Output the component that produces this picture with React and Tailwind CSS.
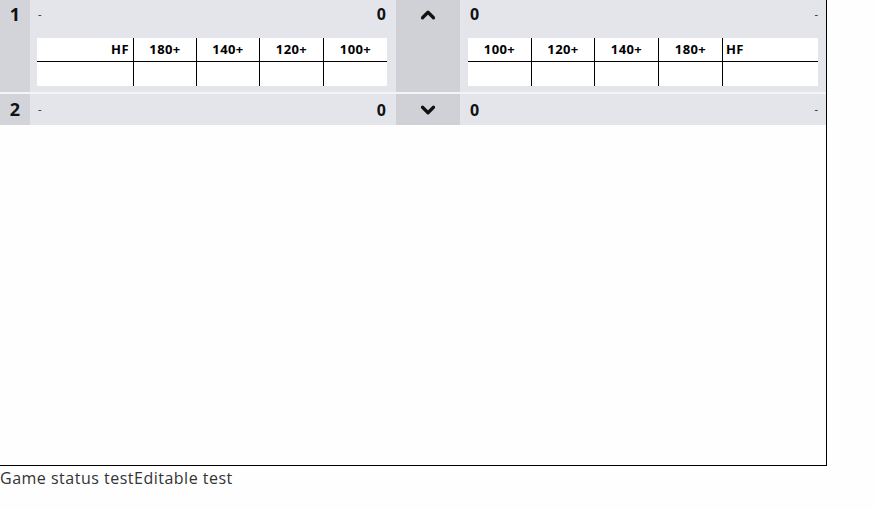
import { ChevronUp, ChevronDown } from 'lucide-react';

const LEFT_COLS = [
  { label: 'HF', w: 'w-[96px]', align: 'justify-end pr-[4px]' },
  { label: '180+', w: 'w-[63px]', align: 'justify-center' },
  { label: '140+', w: 'w-[63px]', align: 'justify-center' },
  { label: '120+', w: 'w-[64px]', align: 'justify-center' },
  { label: '100+', w: 'w-[64px]', align: 'justify-center' },
];

const RIGHT_COLS = [
  { label: '100+', w: 'w-[63px]', align: 'justify-center' },
  { label: '120+', w: 'w-[63px]', align: 'justify-center' },
  { label: '140+', w: 'w-[64px]', align: 'justify-center' },
  { label: '180+', w: 'w-[64px]', align: 'justify-center' },
  { label: 'HF', w: 'w-[96px]', align: 'justify-start pl-[3px]' },
];

const ScoreTable = ({ cols, className }) => (
  <div className={`flex bg-white w-[350px] ${className}`}>
    {cols.map((c, i) => (
      <div key={c.label} className={`${c.w} flex flex-col ${i > 0 ? 'border-l border-black' : ''}`}>
        <div className={`h-[24px] flex items-center ${c.align} text-[13px] tracking-[0.4px] font-bold text-black border-b border-black`}>
          {c.label}
        </div>
        <div className="h-[24px]" />
      </div>
    ))}
  </div>
);

const Header = ({ num, Chevron, expanded }) => (
  <div className="flex">
    <div className="w-[30px] bg-[#d3d4da] flex justify-center pt-[4px] text-[18px] font-bold text-[#111] leading-[20px]">
      {num}
    </div>
    <div className="w-[366px] bg-[#e4e5ea] flex flex-col">
      <div className="h-[28px] flex items-center justify-between pl-[8px] pr-[10px]">
        <span className="text-[11px] text-[#222]">-</span>
        <span className="text-[16px] font-bold text-[#111]">0</span>
      </div>
      {expanded && <ScoreTable cols={LEFT_COLS} className="ml-[7px] mt-[10px] mb-[6px]" />}
    </div>
    <div className="w-[64px] bg-[#d0d1d7] flex justify-center pt-[4px]">
      <Chevron size={22} strokeWidth={3.5} className="text-[#111]" />
    </div>
    <div className="w-[366px] bg-[#e4e5ea] flex flex-col">
      <div className="h-[28px] flex items-center justify-between pl-[10px] pr-[8px]">
        <span className="text-[16px] font-bold text-[#111]">0</span>
        <span className="text-[11px] text-[#222]">-</span>
      </div>
      {expanded && <ScoreTable cols={RIGHT_COLS} className="ml-[8px] mt-[10px] mb-[6px]" />}
    </div>
  </div>
);

export default function App() {
  return (
    <div className="bg-[#fefefe] w-[874px] h-[510px] overflow-hidden" style={{ fontFamily: '"Open Sans", "Liberation Sans", sans-serif' }}>
      <div className="w-[827px] h-[466px] border-r border-b border-black flex flex-col">
        <Header num="1" Chevron={ChevronUp} expanded />
        <div className="h-[2px] bg-[#f4f4f6]" />
        <div className="h-[31px] flex [&>div]:h-[31px]">
          <div className="w-[30px] bg-[#d3d4da] flex items-center justify-center text-[18px] font-bold text-[#111]">2</div>
          <div className="w-[366px] bg-[#e4e5ea] flex items-center justify-between pl-[8px] pr-[10px]">
            <span className="text-[11px] text-[#222]">-</span>
            <span className="text-[16px] font-bold text-[#111]">0</span>
          </div>
          <div className="w-[64px] bg-[#d0d1d7] flex items-center justify-center">
            <ChevronDown size={22} strokeWidth={3.5} className="text-[#111]" />
          </div>
          <div className="w-[366px] bg-[#e4e5ea] flex items-center justify-between pl-[10px] pr-[8px]">
            <span className="text-[16px] font-bold text-[#111]">0</span>
            <span className="text-[11px] text-[#222]">-</span>
          </div>
        </div>
      </div>
      <div className="mt-[1px] text-[16px] tracking-[0.5px] leading-[22px] text-[#333]">
        Game status testEditable test
      </div>
    </div>
  );
}
